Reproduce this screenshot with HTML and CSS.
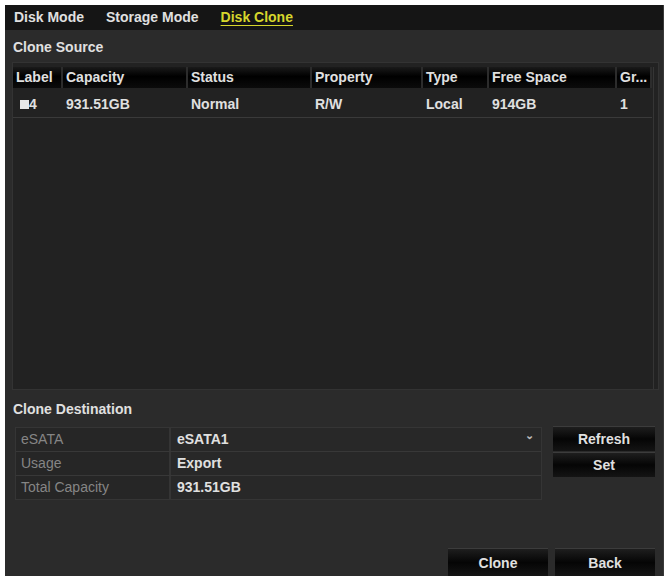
FILE: index.html
```html
<!DOCTYPE html>
<html lang="en">
<head>
  <meta charset="UTF-8">
  <title>Storage - Disk Clone</title>
  <link rel="stylesheet" href="styles.css">
</head>
<body>
  <div class="screen">
    <nav class="tabs">
      <span class="tab">Disk Mode</span>
      <span class="tab">Storage Mode</span>
      <span class="tab active">Disk Clone</span>
    </nav>

    <div class="section-title">Clone Source</div>
    <div class="grid-frame">
      <div class="grid">
        <div class="grid-row head">
          <div class="cell">Label</div>
          <div class="cell">Capacity</div>
          <div class="cell">Status</div>
          <div class="cell">Property</div>
          <div class="cell">Type</div>
          <div class="cell">Free Space</div>
          <div class="cell">Gr...</div>
        </div>
        <div class="grid-row">
          <div class="cell"><span class="check"></span>4</div>
          <div class="cell">931.51GB</div>
          <div class="cell">Normal</div>
          <div class="cell">R/W</div>
          <div class="cell">Local</div>
          <div class="cell">914GB</div>
          <div class="cell">1</div>
        </div>
      </div>
      <div class="scroll-track"></div>
    </div>

    <div class="section-title dest">Clone Destination</div>
    <div class="dest-row">
      <div class="form">
        <div class="form-row">
          <div class="form-label">eSATA</div>
          <div class="form-value select">eSATA1<span class="arrow">&#8964;</span></div>
        </div>
        <div class="form-row">
          <div class="form-label">Usage</div>
          <div class="form-value">Export</div>
        </div>
        <div class="form-row">
          <div class="form-label">Total Capacity</div>
          <div class="form-value">931.51GB</div>
        </div>
      </div>
      <div class="side-buttons">
        <button class="btn">Refresh</button>
        <button class="btn">Set</button>
      </div>
    </div>

    <div class="footer">
      <button class="btn big">Clone</button>
      <button class="btn big">Back</button>
    </div>
  </div>
</body>
</html>
```

FILE: styles.css
```css
body {
  margin: 0;
  background-color: #ffffff;
  font-family: "Liberation Sans", Arial, sans-serif;
  font-size: 14px;
  font-weight: bold;
  color: #e0e0e0;
}

.screen {
  margin: 5px 4px 0 5px;
  height: 571px;
  background-color: #2b2b2b;
  border-right: 1px solid #3a3a3a;
  display: flex;
  flex-direction: column;
  overflow: hidden;
}

/* top tab strip */
.tabs {
  height: 25px;
  background-color: #151515;
  display: flex;
  align-items: center;
  gap: 22px;
  padding-left: 9px;
}

.tab {
  line-height: 25px;
}

.tab.active {
  color: #d6d62c;
  text-decoration: underline;
  text-underline-offset: 3px;
}

.section-title {
  height: 32px;
  line-height: 34px;
  padding-left: 8px;
}

.section-title.dest {
  height: 37px;
  line-height: 38px;
}

/* clone source table */
.grid-frame {
  margin: 0 4px 0 7px;
  height: 328px;
  background-color: #222222;
  border: 1px solid #333333;
  box-sizing: border-box;
  display: flex;
  padding-top: 4px;
}

.grid {
  flex: 1;
}

.grid-row {
  display: grid;
  grid-template-columns: 50px 125px 124px 111px 66px 128px 35px;
  height: 26px;
  border-bottom: 1px solid #3a3a3a;
  align-items: center;
}

.grid-row.head {
  height: 21px;
  border-bottom: 3px solid #222222;
}

.grid-row.head .cell {
  height: 21px;
  line-height: 21px;
  background: linear-gradient(#1a1a1a, #000000 45%, #0b0b0b);
  border-right: 2px solid #2c2c2c;
}

.cell {
  padding-left: 3px;
  white-space: nowrap;
  overflow: hidden;
  display: flex;
  align-items: center;
}

.check {
  display: inline-block;
  width: 9px;
  height: 9px;
  background-color: #e8e8e8;
  margin: 0 0 0 4px;
}

.scroll-track {
  width: 7px;
  border-left: 1px solid #353535;
  margin-left: 1px;
}

/* clone destination */
.dest-row {
  display: flex;
  align-items: flex-start;
  padding-left: 10px;
}

.form {
  width: 525px;
  border: 1px solid #353535;
  background-color: #2e2e2e;
}

.form-row {
  display: flex;
  height: 23px;
  border-bottom: 1px solid #383838;
}

.form-row:last-child {
  border-bottom: none;
}

.form-label {
  width: 148px;
  padding-left: 5px;
  line-height: 23px;
  color: #858585;
  font-weight: normal;
  background-color: #262626;
  border-right: 2px solid #353535;
}

.form-value {
  flex: 1;
  padding-left: 6px;
  line-height: 23px;
  background-color: #282828;
  position: relative;
}

.arrow {
  position: absolute;
  right: 7px;
  top: -4px;
  font-size: 11px;
  color: #bbbbbb;
}

.side-buttons {
  display: flex;
  flex-direction: column;
  gap: 1px;
  margin-left: 11px;
  margin-top: -1px;
}

.btn {
  font-family: "Liberation Sans", Arial, sans-serif;
  font-size: 14px;
  font-weight: bold;
  color: #e0e0e0;
  width: 102px;
  height: 25px;
  padding: 0;
  border: none;
  border-top: 1px solid #3c3c3c;
  background: linear-gradient(#1e1e1e, #050505 50%, #141414);
}

.footer {
  margin-top: auto;
  display: flex;
  justify-content: flex-end;
  gap: 7px;
  padding-right: 8px;
}

.btn.big {
  width: 100px;
  height: 28px;
}
```
